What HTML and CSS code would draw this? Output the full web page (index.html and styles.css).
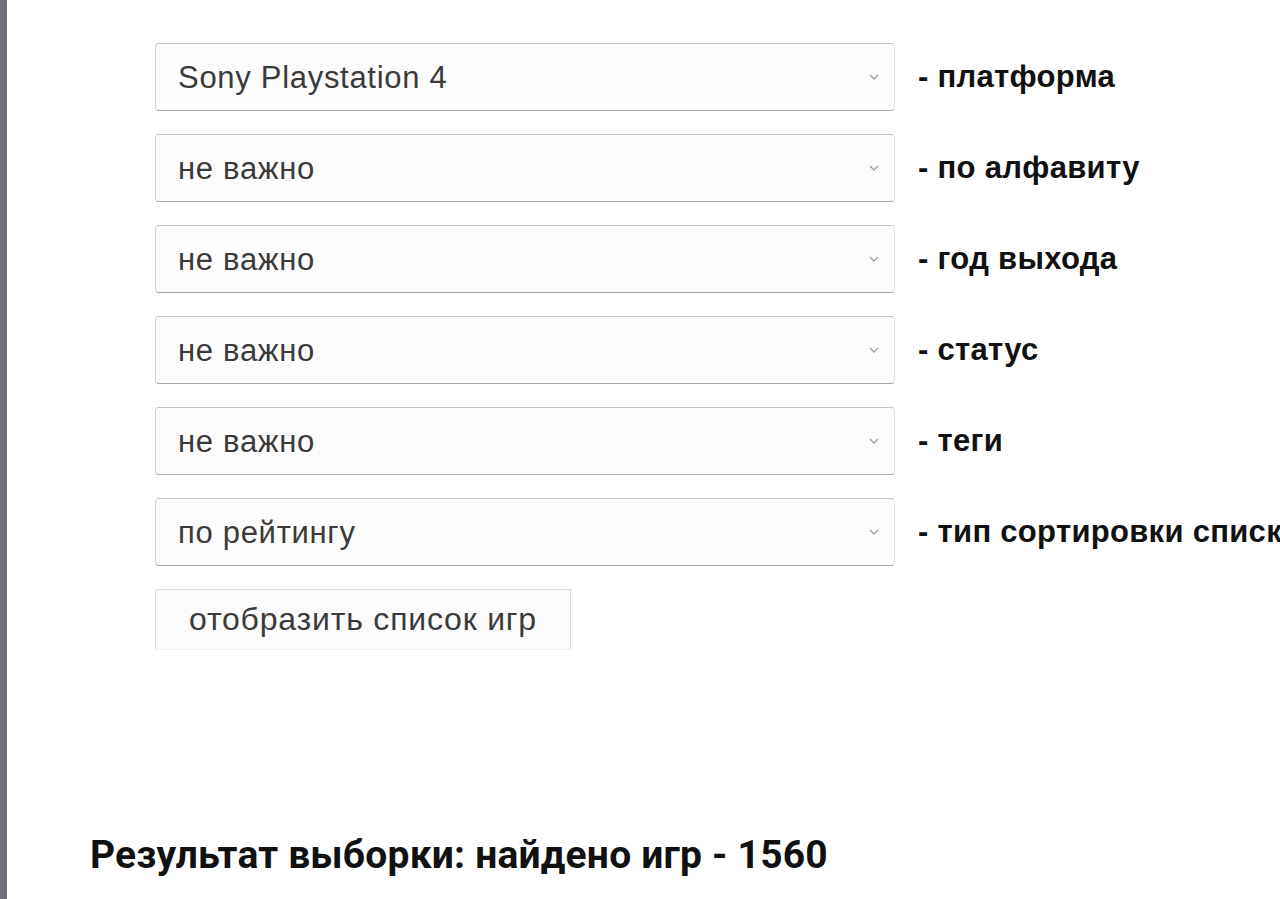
FILE: index.html
```html
<!DOCTYPE html>
<html lang="ru">
<head>
<meta charset="utf-8">
<title>Выборка игр</title>
<link rel="stylesheet" href="styles.css">
</head>
<body>
<div class="page">
  <form class="filters">
    <div class="row">
      <span class="select-wrap">
        <select class="select"><option>Sony Playstation 4</option></select>
        <svg class="chev" width="12" height="8" viewBox="0 0 12 8"><path d="M2 2l4 4 4-4" fill="none" stroke="#a0a0a0" stroke-width="1.4"/></svg>
      </span>
      <span class="label">- платформа</span>
    </div>
    <div class="row">
      <span class="select-wrap">
        <select class="select"><option>не важно</option></select>
        <svg class="chev" width="12" height="8" viewBox="0 0 12 8"><path d="M2 2l4 4 4-4" fill="none" stroke="#a0a0a0" stroke-width="1.4"/></svg>
      </span>
      <span class="label">- по алфавиту</span>
    </div>
    <div class="row">
      <span class="select-wrap">
        <select class="select"><option>не важно</option></select>
        <svg class="chev" width="12" height="8" viewBox="0 0 12 8"><path d="M2 2l4 4 4-4" fill="none" stroke="#a0a0a0" stroke-width="1.4"/></svg>
      </span>
      <span class="label">- год выхода</span>
    </div>
    <div class="row">
      <span class="select-wrap">
        <select class="select"><option>не важно</option></select>
        <svg class="chev" width="12" height="8" viewBox="0 0 12 8"><path d="M2 2l4 4 4-4" fill="none" stroke="#a0a0a0" stroke-width="1.4"/></svg>
      </span>
      <span class="label">- статус</span>
    </div>
    <div class="row">
      <span class="select-wrap">
        <select class="select"><option>не важно</option></select>
        <svg class="chev" width="12" height="8" viewBox="0 0 12 8"><path d="M2 2l4 4 4-4" fill="none" stroke="#a0a0a0" stroke-width="1.4"/></svg>
      </span>
      <span class="label">- теги</span>
    </div>
    <div class="row">
      <span class="select-wrap">
        <select class="select"><option>по рейтингу</option></select>
        <svg class="chev" width="12" height="8" viewBox="0 0 12 8"><path d="M2 2l4 4 4-4" fill="none" stroke="#a0a0a0" stroke-width="1.4"/></svg>
      </span>
      <span class="label">- тип сортировки списка</span>
    </div>
    <button type="button" class="btn">отобразить список игр</button>
  </form>
  <h2 class="result">Результат выборки: найдено игр - 1560</h2>
</div>
</body>
</html>
```

FILE: styles.css
```css
html, body {
  margin: 0;
  padding: 0;
  height: 100%;
  overflow: hidden;
  background: #ffffff;
}
.page {
  box-sizing: border-box;
  height: 100%;
  border-left: 7px solid #6e7079;
  padding-top: 43px;
  font-family: "Liberation Sans", Arial, sans-serif;
  white-space: nowrap;
}
.filters {
  padding-left: 148px;
  display: flex;
  flex-direction: column;
  align-items: flex-start;
  gap: 23px;
}
.row {
  display: flex;
  align-items: center;
  gap: 23px;
}
.select-wrap {
  position: relative;
  display: block;
}
.select {
  appearance: none;
  -webkit-appearance: none;
  display: block;
  width: 740px;
  height: 68px;
  box-sizing: border-box;
  padding: 0 0 0 22px;
  margin: 0;
  font-family: "Liberation Sans", Arial, sans-serif;
  font-size: 31px;
  letter-spacing: 0.7px;
  color: #3a3a3a;
  background: #fcfcfc;
  border: 1px solid #e2e2e2;
  border-top-color: #c4c4c4;
  border-left-color: #cfcfcf;
  border-bottom-color: #a9a9b2;
  border-radius: 4px;
  outline: none;
}
.chev {
  position: absolute;
  right: 15px;
  top: 30px;
}
.label {
  font-size: 31px;
  font-weight: 700;
  letter-spacing: 0.3px;
  color: #111111;
}
.btn {
  width: 416px;
  height: 61px;
  margin: 0;
  padding: 0;
  font-family: "Liberation Sans", Arial, sans-serif;
  font-size: 32px;
  letter-spacing: 0.8px;
  color: #3a3a3a;
  background: #fbfbfb;
  border: 1px solid #dcdcdc;
  border-bottom-color: #f2f2f2;
  border-radius: 2px;
}
.result {
  margin: 182px 0 0 83px;
  font-family: Roboto, "Liberation Sans", sans-serif;
  font-size: 39px;
  font-weight: 700;
  letter-spacing: 0.2px;
  color: #111111;
}
```
